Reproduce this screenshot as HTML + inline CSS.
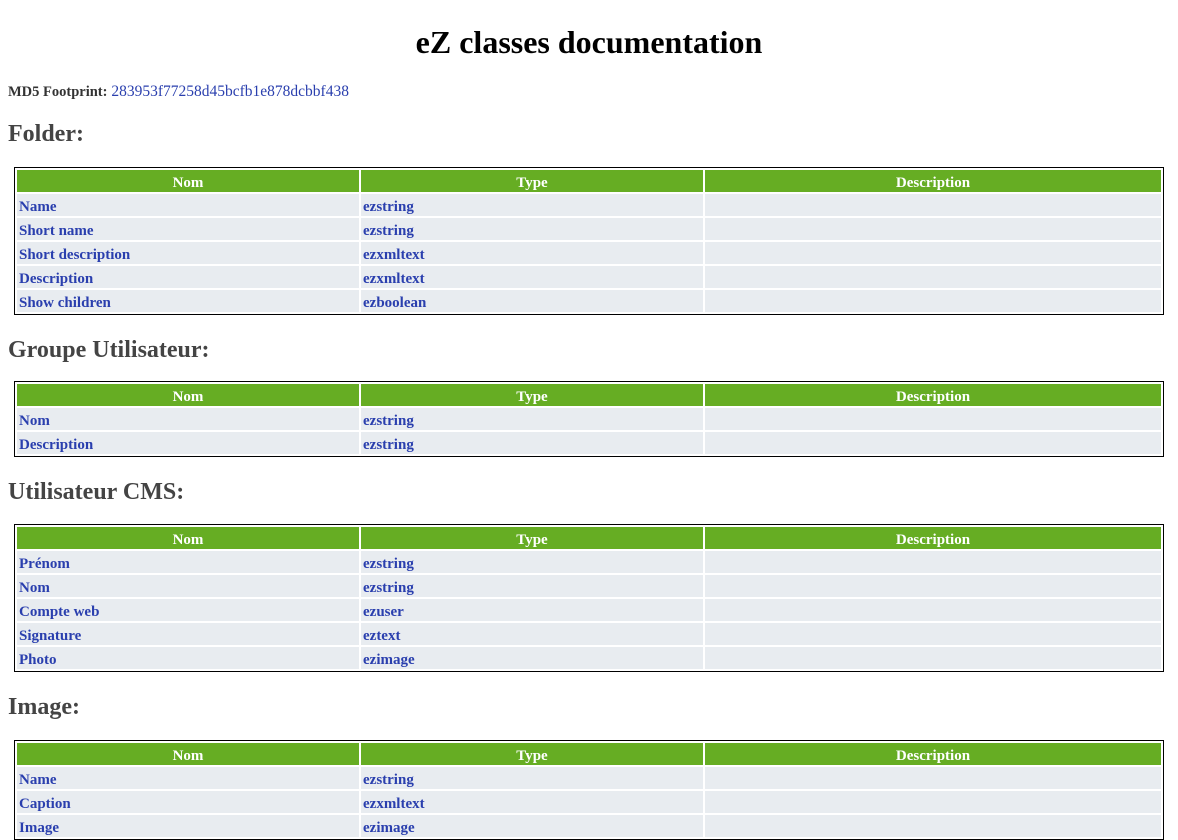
<!DOCTYPE html>
<html><head><meta charset="utf-8"><style>
body{margin:0;background:#fff;font-family:"Liberation Serif",serif;}
h1{position:absolute;top:24px;left:0;width:1178px;margin:0;text-align:center;font-size:32px;line-height:36px;color:#000;font-weight:bold;}
.md5{position:absolute;top:82px;left:8px;font-size:15.5px;line-height:20px;color:#333;}
.md5 b{color:#333;font-size:14.5px}
.md5 span{color:#2a3fae}
h2{position:absolute;left:8px;margin:0;font-size:24px;line-height:30px;color:#444;font-weight:bold;}
table{position:absolute;left:14px;width:1150px;border:1px solid #000;border-spacing:2px;}
th,td{box-sizing:border-box;height:22px;line-height:18px;padding:4px 0 0 0;vertical-align:top;font-size:15px;font-weight:bold;overflow:hidden;white-space:nowrap;}
th{background:#66ad23;color:#fff;text-align:center;}
td{background:#e8ecf0;color:#2a3fae;padding-left:2px;}
</style></head><body>
<h1>eZ classes documentation</h1>
<div class="md5"><b>MD5 Footprint:</b> <span>283953f77258d45bcfb1e878dcbbf438</span></div>

<h2 style="top:119px">Folder:</h2>
<table style="top:167px"><colgroup><col style="width:342px"><col style="width:342px"><col></colgroup>
<tr><th>Nom</th><th>Type</th><th>Description</th></tr>
<tr><td>Name</td><td>ezstring</td><td></td></tr>
<tr><td>Short name</td><td>ezstring</td><td></td></tr>
<tr><td>Short description</td><td>ezxmltext</td><td></td></tr>
<tr><td>Description</td><td>ezxmltext</td><td></td></tr>
<tr><td>Show children</td><td>ezboolean</td><td></td></tr>
</table>

<h2 style="top:335px">Groupe Utilisateur:</h2>
<table style="top:381px"><colgroup><col style="width:342px"><col style="width:342px"><col></colgroup>
<tr><th>Nom</th><th>Type</th><th>Description</th></tr>
<tr><td>Nom</td><td>ezstring</td><td></td></tr>
<tr><td>Description</td><td>ezstring</td><td></td></tr>
</table>

<h2 style="top:477px">Utilisateur CMS:</h2>
<table style="top:524px"><colgroup><col style="width:342px"><col style="width:342px"><col></colgroup>
<tr><th>Nom</th><th>Type</th><th>Description</th></tr>
<tr><td>Prénom</td><td>ezstring</td><td></td></tr>
<tr><td>Nom</td><td>ezstring</td><td></td></tr>
<tr><td>Compte web</td><td>ezuser</td><td></td></tr>
<tr><td>Signature</td><td>eztext</td><td></td></tr>
<tr><td>Photo</td><td>ezimage</td><td></td></tr>
</table>

<h2 style="top:692px">Image:</h2>
<table style="top:740px"><colgroup><col style="width:342px"><col style="width:342px"><col></colgroup>
<tr><th>Nom</th><th>Type</th><th>Description</th></tr>
<tr><td>Name</td><td>ezstring</td><td></td></tr>
<tr><td>Caption</td><td>ezxmltext</td><td></td></tr>
<tr><td>Image</td><td>ezimage</td><td></td></tr>
</table>
</body></html>
